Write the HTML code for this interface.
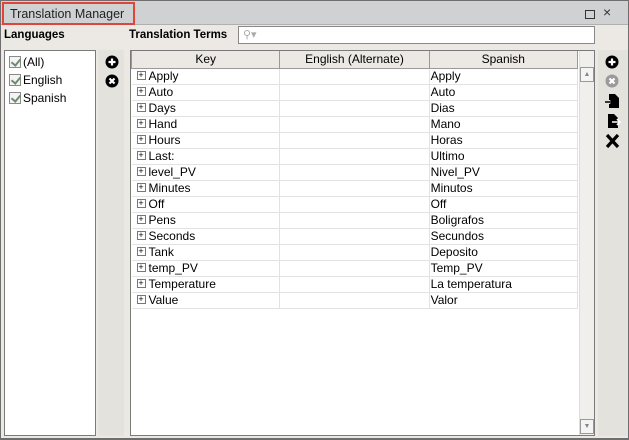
<!DOCTYPE html>
<html><head><style>
*{box-sizing:border-box;margin:0;padding:0}
body{width:629px;height:440px;overflow:hidden;background:#fff;font-family:"Liberation Sans",sans-serif;font-size:12px;color:#000}
.frame{position:absolute;left:0;top:0;width:629px;height:440px;border:1px solid #6e6e6e;border-bottom:2px solid #6e6e6e;background:#ece9e4}
.title{position:absolute;left:0;top:0;width:627px;height:24px;background:#cfd1d3;border-bottom:1px solid #b0b0b0}
.tbox{position:absolute;left:1px;top:1px;width:133px;height:23px;border:2px solid #e0453c;padding:3px 0 0 6px;font-size:12.5px;color:#222}
.abs{position:absolute}
.box{position:absolute;background:#fff;border:1px solid #7a7a7a}
.lbl{position:absolute;font-weight:bold;font-size:11.5px}
.cb{display:flex;align-items:center;height:18px;font-size:12px}
.cb i{display:inline-block;width:12px;height:12px;border:1px solid #8a8a8a;background:#f4f4f4;margin:0 2px 0 4px;position:relative}
.cb i:after{content:"";position:absolute;left:3px;top:0px;width:4px;height:7px;border:solid #6f8a6f;border-width:0 2px 2px 0;transform:rotate(40deg)}
table{border-collapse:collapse;position:absolute;left:0;top:0;width:447px}
th{height:17px;font-weight:normal;background:#ece9e4;border:1px solid #999;border-top:0;font-size:12px}
td{height:16px;border-right:1px solid #e2e2e2;border-bottom:1px solid #e2e2e2;padding:0 0 0 1px;font-size:12px;white-space:nowrap}
.pl{display:inline-block;width:9px;height:9px;border:1px solid #777;font-size:9px;line-height:7px;text-align:center;margin:0 3px 0 4px;vertical-align:middle;position:relative;top:-1px}
</style></head><body>
<div class="frame">
<div class="title"><div class="tbox">Translation Manager</div>
<div class="abs" style="left:584px;top:9px;width:10px;height:9px;border:1px solid #333"></div>
<div class="abs" style="left:602px;top:3px;font-size:14px;color:#333">×</div>
</div>
<div class="lbl" style="left:3px;top:28px">Languages</div>
<div class="lbl" style="left:128px;top:28px">Translation Terms</div>
<div class="box" style="left:237px;top:25px;width:357px;height:18px;border-color:#888"><span style="position:absolute;left:4px;top:1px;color:#aaa;font-size:11px">&#9906;▾</span></div>
<div class="box" style="left:3px;top:49px;width:92px;height:386px;padding-top:2px">
<div class="cb"><i></i>(All)</div><div class="cb"><i></i>English</div><div class="cb"><i></i>Spanish</div></div>
<div class="abs" style="left:97px;top:49px;width:26px;height:386px;background:#e4e2dd"></div>
<svg class="abs" style="left:104px;top:54px" width="14" height="33" viewBox="0 0 14 33">
<circle cx="7" cy="7" r="6.5"/><path d="M7 3.5v7M3.5 7h7" stroke="#fff" stroke-width="2.2"/>
<circle cx="7" cy="26" r="6.5"/><path d="M4.5 23.5l5 5M9.5 23.5l-5 5" stroke="#fff" stroke-width="2.2"/>
</svg>
<div class="box" style="left:129px;top:49px;width:465px;height:386px;overflow:hidden">
<table><colgroup><col style="width:149px"><col style="width:150px"><col style="width:149px"></colgroup>
<tr><th>Key</th><th>English (Alternate)</th><th>Spanish</th></tr>
<tr><td><span class="pl">+</span>Apply</td><td></td><td>Apply</td></tr>
<tr><td><span class="pl">+</span>Auto</td><td></td><td>Auto</td></tr>
<tr><td><span class="pl">+</span>Days</td><td></td><td>Dias</td></tr>
<tr><td><span class="pl">+</span>Hand</td><td></td><td>Mano</td></tr>
<tr><td><span class="pl">+</span>Hours</td><td></td><td>Horas</td></tr>
<tr><td><span class="pl">+</span>Last:</td><td></td><td>Ultimo</td></tr>
<tr><td><span class="pl">+</span>level_PV</td><td></td><td>Nivel_PV</td></tr>
<tr><td><span class="pl">+</span>Minutes</td><td></td><td>Minutos</td></tr>
<tr><td><span class="pl">+</span>Off</td><td></td><td>Off</td></tr>
<tr><td><span class="pl">+</span>Pens</td><td></td><td>Boligrafos</td></tr>
<tr><td><span class="pl">+</span>Seconds</td><td></td><td>Secundos</td></tr>
<tr><td><span class="pl">+</span>Tank</td><td></td><td>Deposito</td></tr>
<tr><td><span class="pl">+</span>temp_PV</td><td></td><td>Temp_PV</td></tr>
<tr><td><span class="pl">+</span>Temperature</td><td></td><td>La temperatura</td></tr>
<tr><td><span class="pl">+</span>Value</td><td></td><td>Valor</td></tr>
</table>
<div class="abs" style="left:448px;top:0;width:16px;height:386px;background:#f0efec;border-left:1px solid #ddd"></div>
<div class="abs" style="left:449px;top:16px;width:14px;height:15px;border:1px solid #999;background:#f4f4f4;font-size:7px;color:#888;text-align:center;line-height:13px">▲</div>
<div class="abs" style="left:449px;top:368px;width:14px;height:15px;border:1px solid #999;background:#f4f4f4;font-size:7px;color:#888;text-align:center;line-height:13px">▼</div>
</div>
<div class="abs" style="left:597px;top:49px;width:30px;height:386px;background:#e4e2dd"></div>
<svg class="abs" style="left:603px;top:53px" width="18" height="98" viewBox="0 0 18 98">
<circle cx="8" cy="8" r="6.5"/><path d="M8 4.5v7M4.5 8h7" stroke="#fff" stroke-width="2.2"/>
<circle cx="8" cy="27" r="6.5" fill="#9a9a9a"/><path d="M5.5 24.5l5 5M10.5 24.5l-5 5" stroke="#fff" stroke-width="2.2"/>
<path d="M5 40h6l4 4v10H5v-4h3v-4H5z"/><path d="M1 48h7M6 45l3 3-3 3" stroke="#000" stroke-width="1.6" fill="none"/>
<path d="M4 60h6l4 4v10H4z"/><path d="M8 68h8M13 65l3 3-3 3" stroke="#fff" stroke-width="1.6" fill="none"/>
<path d="M3 81l11 12M14 81L3 93" stroke="#000" stroke-width="3.2"/>
</svg>
</div>
</body></html>
